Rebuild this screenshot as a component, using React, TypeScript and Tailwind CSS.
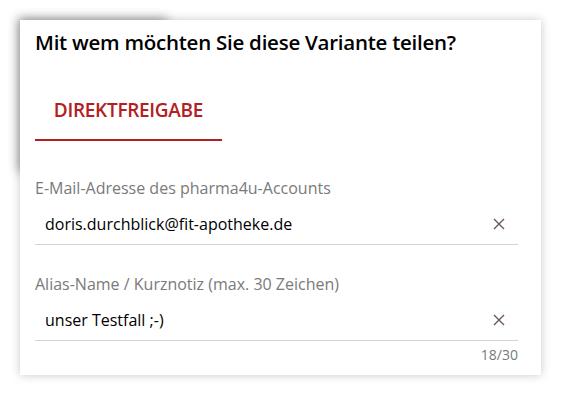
import { JSX } from "react"

function ClearIcon(): JSX.Element {
  return (
    <svg width="12" height="12" viewBox="0 0 12 12" className="shrink-0">
      <path d="M1 1 L11 11 M11 1 L1 11" stroke="#6a5758" strokeWidth="1.4" fill="none" />
    </svg>
  )
}

interface FieldProps {
  label: string
  value: string
  counter?: string
}

function Field({ label, value, counter }: FieldProps): JSX.Element {
  return (
    <div className="flex flex-col">
      <label className="text-[16px] leading-[20px] text-[#7a7a7a]">{label}</label>
      <div className="flex items-center justify-between border-b border-[#d4d4d4] pl-[10px] pr-[13px] pt-[5px] h-[47px]">
        <span className="text-[16px] text-black">{value}</span>
        <ClearIcon />
      </div>
      {counter && (
        <div className="text-right text-[14px] leading-[18px] mt-[5px] text-[#7a7a7a]">
          {counter}
        </div>
      )}
    </div>
  )
}

export default function App(): JSX.Element {
  return (
    <div
      className="w-[565px] h-[402px] bg-white p-[20px]"
      style={{ fontFamily: '"Open Sans", "Noto Sans", sans-serif' }}
    >
      <div className="relative w-[521px] h-[355px]">
        <div className="absolute left-0 top-0 w-[145px] h-[150px] shadow-[0_0_10px_2px_rgba(0,0,0,0.35)]" />
        <div className="relative w-full h-full bg-white shadow-[0_0_9px_rgba(0,0,0,0.22)] px-[15px] pt-[7px]">
          <h1 className="text-[20.5px] leading-[30px] font-semibold text-black tracking-[-0.25px]">
            Mit wem möchten Sie diese Variante teilen?
          </h1>
          <div className="mt-[40px] w-[187px] border-b-2 border-[#b3201f] pb-[16px] text-center">
            <span className="text-[19px] leading-[26px] font-semibold text-[#b3201f] tracking-[-0.3px]">
              DIREKTFREIGABE
            </span>
          </div>
          <div className="mt-[37px] mr-[8px] flex flex-col gap-[29px]">
            <Field label="E-Mail-Adresse des pharma4u-Accounts" value="doris.durchblick@fit-apotheke.de" />
            <Field label="Alias-Name / Kurznotiz (max. 30 Zeichen)" value="unser Testfall ;-)" counter="18/30" />
          </div>
        </div>
      </div>
    </div>
  )
}
